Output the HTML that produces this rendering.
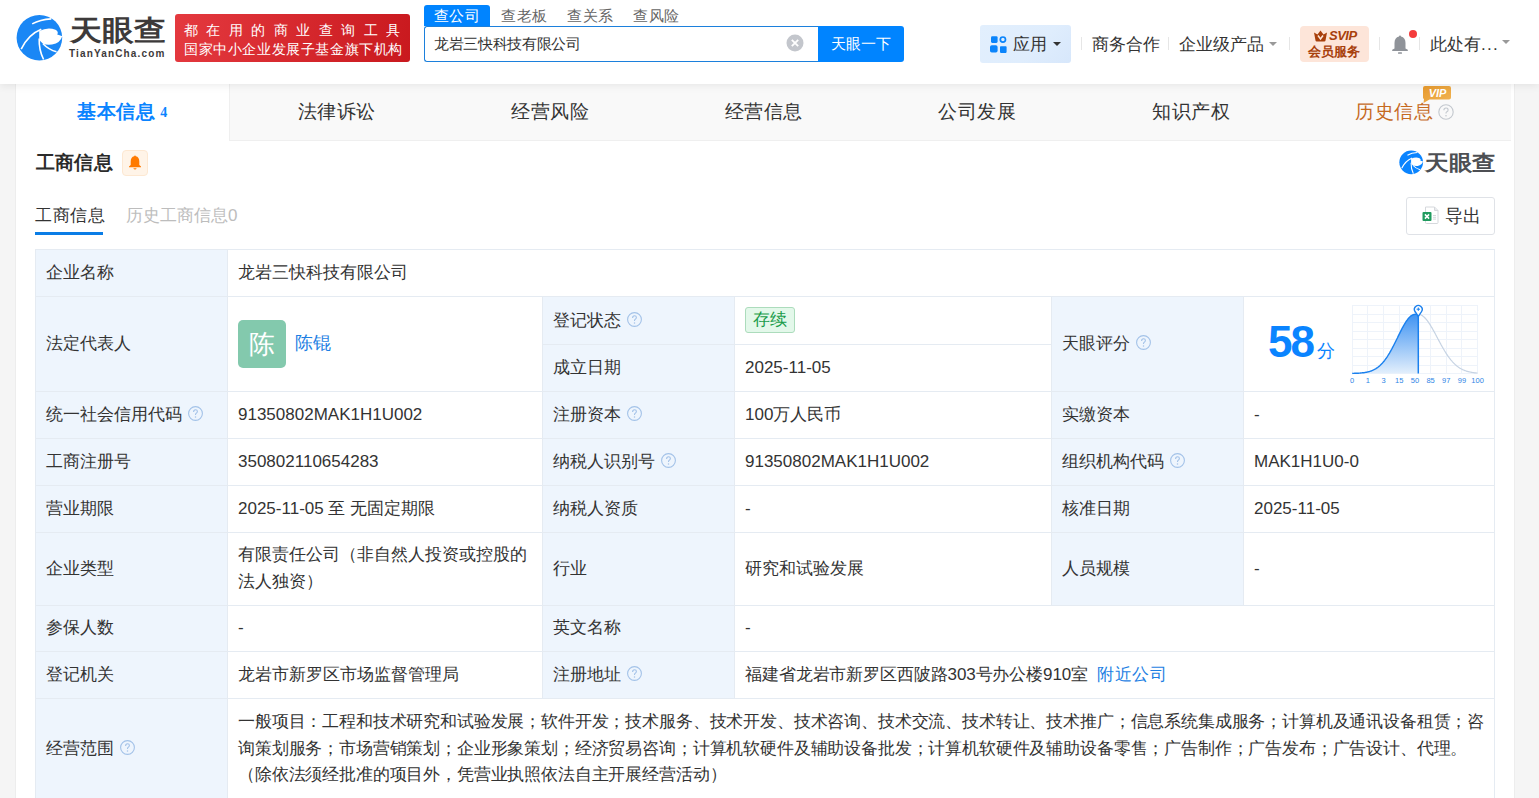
<!DOCTYPE html>
<html><head><meta charset="utf-8">
<style>
*{box-sizing:border-box;margin:0;padding:0}
html,body{width:1539px;height:798px;overflow:hidden;background:#f5f5f5;font-family:"Liberation Sans",sans-serif;color:#333}
.abs{position:absolute}
.nw{white-space:nowrap}
#hdr{position:absolute;left:0;top:0;width:1539px;height:84px;background:#fff;box-shadow:0 2px 8px rgba(0,0,0,.075);z-index:5}
.banner{left:175px;top:14px;width:235px;height:47.5px;border-radius:3px;background:linear-gradient(100deg,#e4393f,#c9191e)}
.stab{top:5px;height:21px;font-size:15px;letter-spacing:0.5px;line-height:21px;color:#666;white-space:nowrap}
.stab.on{background:#0084ff;color:#fff;border-radius:3px 3px 0 0;text-align:center}
.search{left:424px;top:26px;width:395px;height:36px;border:1px solid #1c80dc;border-right:none;border-radius:3px 0 0 3px;background:#fff}
.sbtn{left:818px;top:26px;width:86px;height:36px;background:#0084ff;color:#fff;font-size:15px;letter-spacing:0.2px;line-height:36px;text-align:center;border-radius:0 3px 3px 0}
.nav{top:33px;font-size:17px;line-height:24px;color:#333;white-space:nowrap}
.sep{top:37px;width:1px;height:13px;background:#e6e6e6}
.caret{width:0;height:0;border-left:4px solid transparent;border-right:4px solid transparent;border-top:4px solid #999}
#card{position:absolute;left:15px;top:84px;width:1500px;height:714px;background:#fff;border-left:1px solid #ededed;border-right:1px solid #ededed}
.tab{position:absolute;top:0;height:57px;background:#f9f9f9;border-bottom:1px solid #efefef;font-size:19px;letter-spacing:0.5px;line-height:56px;text-align:center;color:#333;white-space:nowrap}
table{position:absolute;left:19px;top:165px;width:1460px;border-collapse:collapse;font-size:17px;color:#333;table-layout:fixed}
td{border:1px solid #e5ebf2;padding:0 10px;vertical-align:middle;line-height:26px;white-space:nowrap}
td.l{background:#eef5fd}
.q{display:inline-block;width:15px;height:15px;vertical-align:-1px;margin-left:6px}
.link{color:#1e7fe3}
</style></head><body>
<div id="hdr">
  <svg class="abs" style="left:14px;top:12px" width="52" height="52" viewBox="0 0 52 52">
    <circle cx="25.4" cy="25.7" r="22.8" fill="#1a87f5"/>
    <path d="M18.2 11.9 Q26 7.6 37.3 6.9" stroke="#fff" stroke-width="1.6" fill="none"/>
    <path d="M7.2 37.2 Q14 22.5 27.3 17.2" stroke="#fff" stroke-width="1.6" fill="none"/>
    <path d="M25.2 26.5 Q24.8 38 29.6 47.5" stroke="#fff" stroke-width="1.6" fill="none"/>
    <path d="M29 31.8 Q35 38 42.5 39.8" stroke="#fff" stroke-width="1.6" fill="none"/>
    <path d="M25.2 19 Q34 14.5 41.5 17.8 Q45 20 43.2 22.5 Q45.5 23 48.2 24.3 Q46.5 31 38 32.5 Q32 33 29 31.8 Q25.5 29.5 25.2 26.5 Z" fill="#fff"/>
  </svg>
  <div class="abs nw" style="left:69.5px;top:14px;font-size:28px;line-height:34px;font-weight:900;color:#3d3a3a;transform:scaleX(1.14);transform-origin:0 0">天眼查</div>
  <div class="abs nw" style="left:69px;top:48px;font-size:10px;line-height:11px;font-weight:bold;color:#3d3a3a;letter-spacing:1.15px">TianYanCha.com</div>
  <div class="abs banner">
    <div class="abs nw" style="left:9px;top:8px;font-size:14px;line-height:16px;letter-spacing:8.45px;color:#fff">都在用的商业查询工具</div>
    <div class="abs nw" style="left:9px;top:27px;font-size:14px;line-height:16px;color:#fff;letter-spacing:0.6px">国家中小企业发展子基金旗下机构</div>
  </div>
  <div class="abs stab on" style="left:424px;width:66px">查公司</div>
  <div class="abs stab" style="left:501px">查老板</div>
  <div class="abs stab" style="left:567px">查关系</div>
  <div class="abs stab" style="left:633px">查风险</div>
  <div class="abs search"></div>
  <div class="abs nw" style="left:434px;top:33px;font-size:15px;line-height:22px;color:#333;letter-spacing:-0.35px">龙岩三快科技有限公司</div>
  <svg class="abs" style="left:786px;top:34px" width="18" height="18" viewBox="0 0 18 18"><circle cx="9" cy="9" r="8.5" fill="#c3c6cc"/><path d="M5.8 5.8 L12.2 12.2 M12.2 5.8 L5.8 12.2" stroke="#fff" stroke-width="1.8"/></svg>
  <div class="abs sbtn">天眼一下</div>

  <div class="abs" style="left:980px;top:25px;width:91px;height:38px;background:linear-gradient(135deg,#e2effd 0%,#dfedfd 60%,#d7e7fb 100%);border-radius:3px"></div>
  <svg class="abs" style="left:990px;top:36px" width="17" height="17" viewBox="0 0 17 17">
    <rect x="1" y="0.3" width="6.6" height="6.6" rx="1.3" fill="#0a84fb"/>
    <circle cx="12.9" cy="3.6" r="2.6" fill="none" stroke="#0a84fb" stroke-width="1.7"/>
    <rect x="0" y="9.3" width="7.6" height="7.2" rx="1.8" fill="#0a84fb"/>
    <rect x="10" y="10.3" width="6.6" height="6.6" rx="0.8" fill="#0a84fb"/>
  </svg>
  <div class="abs nav" style="left:1013px">应用</div>
  <div class="abs caret" style="left:1053px;top:42px;border-top-color:#333"></div>
  <div class="abs sep" style="left:1081px"></div>
  <div class="abs nav" style="left:1092px">商务合作</div>
  <div class="abs sep" style="left:1168px"></div>
  <div class="abs nav" style="left:1179px">企业级产品</div>
  <div class="abs caret" style="left:1269px;top:42px"></div>
  <div class="abs sep" style="left:1289px"></div>
  <div class="abs" style="left:1300px;top:26px;width:69px;height:36px;background:#fde5d9;border-radius:4px"></div>
  <svg class="abs" style="left:1313px;top:30px" width="15" height="12" viewBox="0 0 15 12">
    <path d="M1 2.5 L4.5 4.5 L7.5 0.5 L10.5 4.5 L14 2.5 L12.5 10.5 Q12.3 11.5 11.3 11.5 L3.7 11.5 Q2.7 11.5 2.5 10.5 Z" fill="#a8400c"/>
    <path d="M5 5.5 L7.5 9 L10 5.5" fill="none" stroke="#fde5d9" stroke-width="1.5"/>
  </svg>
  <div class="abs nw" style="left:1329px;top:28px;font-size:13px;line-height:16px;font-weight:bold;font-style:italic;color:#a8400c;letter-spacing:-0.5px">SVIP</div>
  <div class="abs nw" style="left:1308px;top:43px;font-size:13px;line-height:17px;font-weight:bold;color:#a8400c">会员服务</div>
  <div class="abs sep" style="left:1379px"></div>
  <svg class="abs" style="left:1391px;top:35px" width="18" height="20" viewBox="0 0 18 20">
    <path d="M9 0.5 Q10 0.5 10 1.5 Q14.5 2.5 14.5 8 L14.5 13.5 L16.8 14.8 L16.8 16 L1.2 16 L1.2 14.8 L3.5 13.5 L3.5 8 Q3.5 2.5 8 1.5 Q8 0.5 9 0.5 Z" fill="#8f9399"/>
    <rect x="7" y="17.2" width="4" height="1.6" rx="0.6" fill="#8f9399"/>
  </svg>
  <div class="abs" style="left:1409px;top:29.5px;width:8px;height:8px;border-radius:50%;background:#f43c3c"></div>
  <div class="abs sep" style="left:1419px"></div>
  <div class="abs nav" style="left:1430px">此处有<span style="letter-spacing:1.3px">...</span></div>
  <div class="abs caret" style="left:1502px;top:40px"></div>
</div>

<div id="card">
  <div class="tab" style="left:0;width:213px;background:#fff;border-bottom-color:#fff;color:#0a84ff;font-weight:bold">基本信息<span style="font-size:14px;font-weight:bold;font-family:'Liberation Serif',serif;margin-left:5px;position:relative;top:-1px">4</span></div>
  <div class="tab" style="left:213px;width:214px;border-left:1px solid #efefef">法律诉讼</div>
  <div class="tab" style="left:427px;width:214px">经营风险</div>
  <div class="tab" style="left:641px;width:213px">经营信息</div>
  <div class="tab" style="left:854px;width:214px">公司发展</div>
  <div class="tab" style="left:1068px;width:214px">知识产权</div>
  <div class="tab" style="left:1282px;width:213px;color:#c66a1f;text-align:left;padding-left:57px">历史信息<svg style="vertical-align:-2px;margin-left:5px" width="16" height="16" viewBox="0 0 16 16"><circle cx="8" cy="8" r="7.2" fill="none" stroke="#c3c8ce" stroke-width="1.1"/><path d="M5.9 6.2 Q5.9 4 8 4 Q10.1 4 10.1 5.9 Q10.1 7.2 8.5 8 Q8 8.3 8 9.6" fill="none" stroke="#c3c8ce" stroke-width="1.1"/><circle cx="8" cy="11.7" r="0.8" fill="#c3c8ce"/></svg></div>
  <svg class="abs" style="left:1406px;top:1px" width="30" height="18" viewBox="0 0 30 18">
    <defs><linearGradient id="vg" x1="0" y1="0" x2="1" y2="1"><stop offset="0" stop-color="#e89a2e"/><stop offset="1" stop-color="#f0b454"/></linearGradient></defs>
    <path d="M3 1 H27 Q29 1 29 3 V12.5 Q29 14.5 27 14.5 H7.5 L1.5 18 L2 14 Q1 13.5 1 12.5 V3 Q1 1 3 1 Z" fill="url(#vg)"/>
    <text x="15.5" y="12" text-anchor="middle" font-size="11" font-weight="bold" font-style="italic" fill="#fff" font-family="Liberation Sans">VIP</text>
  </svg>

  <div class="abs nw" style="left:20px;top:66px;font-size:19px;line-height:26px;font-weight:bold;color:#2b2b2b;letter-spacing:0.2px">工商信息</div>
  <div class="abs" style="left:106px;top:66px;width:26px;height:26px;background:#fff4e8;border:1px solid #fde8d2;border-radius:4px"></div>
  <svg class="abs" style="left:112px;top:71px" width="14" height="15" viewBox="0 0 14 15">
    <path d="M7 0.5 Q7.8 0.5 7.8 1.3 Q11.3 2 11.3 6.5 L11.3 10 L13 11.5 L13 12.3 L1 12.3 L1 11.5 L2.7 10 L2.7 6.5 Q2.7 2 6.2 1.3 Q6.2 0.5 7 0.5 Z" fill="#ff7a00"/>
    <path d="M5.3 13.2 H8.7 Q8.2 14.5 7 14.5 Q5.8 14.5 5.3 13.2 Z" fill="#ff7a00"/>
  </svg>

  <svg class="abs" style="left:1381.6px;top:65.2px" width="27" height="27" viewBox="0 0 52 52">
    <circle cx="25.4" cy="25.7" r="22.8" fill="#0a84ff"/>
    <path d="M18.2 11.9 Q26 7.6 37.3 6.9" stroke="#fff" stroke-width="2" fill="none"/>
    <path d="M7.2 37.2 Q14 22.5 27.3 17.2" stroke="#fff" stroke-width="2" fill="none"/>
    <path d="M25.2 26.5 Q24.8 38 29.6 47.5" stroke="#fff" stroke-width="2" fill="none"/>
    <path d="M29 31.8 Q35 38 42.5 39.8" stroke="#fff" stroke-width="2" fill="none"/>
    <path d="M25.2 19 Q34 14.5 41.5 17.8 Q45 20 43.2 22.5 Q45.5 23 48.2 24.3 Q46.5 31 38 32.5 Q32 33 29 31.8 Q25.5 29.5 25.2 26.5 Z" fill="#fff"/>
  </svg>
  <div class="abs nw" style="left:1408.5px;top:66px;font-size:21px;line-height:26px;font-weight:bold;color:#4d4f53;transform:scaleX(1.12);transform-origin:0 0">天眼查</div>

  <div class="abs nw" style="left:19px;top:118.5px;font-size:17px;letter-spacing:0.5px;line-height:26px;color:#333">工商信息</div>
  <div class="abs" style="left:19px;top:148px;width:68px;height:2.5px;background:#0a7de6"></div>
  <div class="abs nw" style="left:110px;top:118.5px;font-size:17px;line-height:26px;color:#bdbdbd">历史工商信息0</div>
  <div class="abs" style="left:1390px;top:113px;width:89px;height:38px;border:1px solid #dfe2e7;border-radius:3px"></div>
  <svg class="abs" style="left:1406px;top:122px" width="18" height="18" viewBox="0 0 18 18">
    <path d="M3.5 1 H12.5 L16 4.5 V16.5 Q16 17.5 15 17.5 H4.5 Q3.5 17.5 3.5 16.5 Z" fill="#fff" stroke="#d5d8dc" stroke-width="1"/>
    <path d="M12.5 1 V4.5 H16" fill="#e8eaed" stroke="#d5d8dc" stroke-width="1"/>
    <path d="M11 9.5 H14 M11 11.3 H14 M11 13.1 H14" stroke="#d0d3d7" stroke-width="0.9"/>
    <rect x="0.5" y="6" width="9" height="9" rx="1" fill="#1f9b5e"/>
    <path d="M2.9 8.4 L7.1 12.6 M7.1 8.4 L2.9 12.6" stroke="#fff" stroke-width="1.5"/>
  </svg>
  <div class="abs nw" style="left:1429px;top:119px;font-size:18px;line-height:26px;color:#333;letter-spacing:-0.5px">导出</div>

  <table>
    <colgroup><col style="width:192px"><col style="width:315px"><col style="width:192px"><col style="width:317px"><col style="width:192px"><col style="width:251px"></colgroup>
    <tr style="height:47px"><td class="l">企业名称</td><td colspan="5">龙岩三快科技有限公司</td></tr>
    <tr style="height:48px"><td class="l" rowspan="2">法定代表人</td><td rowspan="2" style="position:relative"><div class="abs" style="left:10px;top:23px;width:48px;height:48px;border-radius:5px;background:#83c9ad;color:#fff;font-size:26px;line-height:48px;text-align:center">陈</div><span class="link" style="margin-left:57px;font-size:18px;position:relative;top:-1px">陈锟</span></td><td class="l">登记状态<svg class="q" viewBox="0 0 15 15"><circle cx="7.5" cy="7.5" r="6.9" fill="none" stroke="#a3c2e8" stroke-width="1.1"/><path d="M5.6 5.9 Q5.6 3.8 7.5 3.8 Q9.4 3.8 9.4 5.6 Q9.4 6.8 8 7.5 Q7.5 7.8 7.5 9" fill="none" stroke="#a3c2e8" stroke-width="1.1"/><circle cx="7.5" cy="10.9" r="0.75" fill="#a3c2e8"/></svg></td><td><span style="display:inline-block;height:26px;padding:0 7px;border:1px solid #acdcbc;background:#e3f8ea;color:#1a9c4a;border-radius:3px;line-height:24px;vertical-align:middle;position:relative;top:-1px">存续</span></td><td class="l" rowspan="2">天眼评分<svg class="q" viewBox="0 0 15 15"><circle cx="7.5" cy="7.5" r="6.9" fill="none" stroke="#a3c2e8" stroke-width="1.1"/><path d="M5.6 5.9 Q5.6 3.8 7.5 3.8 Q9.4 3.8 9.4 5.6 Q9.4 6.8 8 7.5 Q7.5 7.8 7.5 9" fill="none" stroke="#a3c2e8" stroke-width="1.1"/><circle cx="7.5" cy="10.9" r="0.75" fill="#a3c2e8"/></svg></td><td rowspan="2"></td></tr>
    <tr style="height:47px"><td class="l">成立日期</td><td>2025-11-05</td></tr>
    <tr style="height:47px"><td class="l">统一社会信用代码<svg class="q" viewBox="0 0 15 15"><circle cx="7.5" cy="7.5" r="6.9" fill="none" stroke="#a3c2e8" stroke-width="1.1"/><path d="M5.6 5.9 Q5.6 3.8 7.5 3.8 Q9.4 3.8 9.4 5.6 Q9.4 6.8 8 7.5 Q7.5 7.8 7.5 9" fill="none" stroke="#a3c2e8" stroke-width="1.1"/><circle cx="7.5" cy="10.9" r="0.75" fill="#a3c2e8"/></svg></td><td>91350802MAK1H1U002</td><td class="l">注册资本<svg class="q" viewBox="0 0 15 15"><circle cx="7.5" cy="7.5" r="6.9" fill="none" stroke="#a3c2e8" stroke-width="1.1"/><path d="M5.6 5.9 Q5.6 3.8 7.5 3.8 Q9.4 3.8 9.4 5.6 Q9.4 6.8 8 7.5 Q7.5 7.8 7.5 9" fill="none" stroke="#a3c2e8" stroke-width="1.1"/><circle cx="7.5" cy="10.9" r="0.75" fill="#a3c2e8"/></svg></td><td>100万人民币</td><td class="l">实缴资本</td><td>-</td></tr>
    <tr style="height:47px"><td class="l">工商注册号</td><td>350802110654283</td><td class="l">纳税人识别号<svg class="q" viewBox="0 0 15 15"><circle cx="7.5" cy="7.5" r="6.9" fill="none" stroke="#a3c2e8" stroke-width="1.1"/><path d="M5.6 5.9 Q5.6 3.8 7.5 3.8 Q9.4 3.8 9.4 5.6 Q9.4 6.8 8 7.5 Q7.5 7.8 7.5 9" fill="none" stroke="#a3c2e8" stroke-width="1.1"/><circle cx="7.5" cy="10.9" r="0.75" fill="#a3c2e8"/></svg></td><td>91350802MAK1H1U002</td><td class="l">组织机构代码<svg class="q" viewBox="0 0 15 15"><circle cx="7.5" cy="7.5" r="6.9" fill="none" stroke="#a3c2e8" stroke-width="1.1"/><path d="M5.6 5.9 Q5.6 3.8 7.5 3.8 Q9.4 3.8 9.4 5.6 Q9.4 6.8 8 7.5 Q7.5 7.8 7.5 9" fill="none" stroke="#a3c2e8" stroke-width="1.1"/><circle cx="7.5" cy="10.9" r="0.75" fill="#a3c2e8"/></svg></td><td>MAK1H1U0-0</td></tr>
    <tr style="height:47px"><td class="l">营业期限</td><td>2025-11-05 至 无固定期限</td><td class="l">纳税人资质</td><td>-</td><td class="l">核准日期</td><td>2025-11-05</td></tr>
    <tr style="height:73px"><td class="l">企业类型</td><td style="line-height:26.8px">有限责任公司（非自然人投资或控股的<br>法人独资）</td><td class="l">行业</td><td>研究和试验发展</td><td class="l">人员规模</td><td>-</td></tr>
    <tr style="height:46px"><td class="l" style="padding-bottom:2px">参保人数</td><td style="padding-bottom:2px">-</td><td class="l" style="padding-bottom:2px">英文名称</td><td colspan="3" style="padding-bottom:2px">-</td></tr>
    <tr style="height:47px"><td class="l">登记机关</td><td>龙岩市新罗区市场监督管理局</td><td class="l">注册地址<svg class="q" viewBox="0 0 15 15"><circle cx="7.5" cy="7.5" r="6.9" fill="none" stroke="#a3c2e8" stroke-width="1.1"/><path d="M5.6 5.9 Q5.6 3.8 7.5 3.8 Q9.4 3.8 9.4 5.6 Q9.4 6.8 8 7.5 Q7.5 7.8 7.5 9" fill="none" stroke="#a3c2e8" stroke-width="1.1"/><circle cx="7.5" cy="10.9" r="0.75" fill="#a3c2e8"/></svg></td><td colspan="3"><span style="letter-spacing:-0.12px">福建省龙岩市新罗区西陂路303号办公楼910室</span><span class="link" style="margin-left:9px;letter-spacing:0.6px">附近公司</span></td></tr>
    <tr style="height:100px"><td class="l" style="vertical-align:top;padding-top:37px">经营范围<svg class="q" viewBox="0 0 15 15"><circle cx="7.5" cy="7.5" r="6.9" fill="none" stroke="#a3c2e8" stroke-width="1.1"/><path d="M5.6 5.9 Q5.6 3.8 7.5 3.8 Q9.4 3.8 9.4 5.6 Q9.4 6.8 8 7.5 Q7.5 7.8 7.5 9" fill="none" stroke="#a3c2e8" stroke-width="1.1"/><circle cx="7.5" cy="10.9" r="0.75" fill="#a3c2e8"/></svg></td><td colspan="5" style="vertical-align:top;padding-top:10px;line-height:26.7px;letter-spacing:-0.16px">一般项目：工程和技术研究和试验发展；软件开发；技术服务、技术开发、技术咨询、技术交流、技术转让、技术推广；信息系统集成服务；计算机及通讯设备租赁；咨<br>询策划服务；市场营销策划；企业形象策划；经济贸易咨询；计算机软硬件及辅助设备批发；计算机软硬件及辅助设备零售；广告制作；广告发布；广告设计、代理。<br>（除依法须经批准的项目外，凭营业执照依法自主开展经营活动）</td></tr>
  </table>
</div>

<div class="abs nw" style="left:1268px;top:318px;font-size:44px;line-height:48px;font-weight:bold;color:#0a84ff;letter-spacing:-2px">58</div>
<div class="abs nw" style="left:1316.5px;top:341px;font-size:18px;line-height:20px;color:#0a84ff">分</div>
<svg class="abs" style="left:1345px;top:300px" width="140" height="88" viewBox="0 0 140 88">
<defs><linearGradient id="gf" x1="0" y1="0" x2="0" y2="1"><stop offset="0" stop-color="#3f93f2"/><stop offset="1" stop-color="#e3effc"/></linearGradient></defs>
<g stroke="#eef3fa" stroke-width="1" shape-rendering="crispEdges"><line x1="7.2" y1="5.9" x2="7.2" y2="73.5"/><line x1="22.9" y1="5.9" x2="22.9" y2="73.5"/><line x1="38.5" y1="5.9" x2="38.5" y2="73.5"/><line x1="54.2" y1="5.9" x2="54.2" y2="73.5"/><line x1="69.9" y1="5.9" x2="69.9" y2="73.5"/><line x1="85.6" y1="5.9" x2="85.6" y2="73.5"/><line x1="101.2" y1="5.9" x2="101.2" y2="73.5"/><line x1="116.9" y1="5.9" x2="116.9" y2="73.5"/><line x1="132.6" y1="5.9" x2="132.6" y2="73.5"/><line x1="7.2" y1="5.9" x2="132.6" y2="5.9"/><line x1="7.2" y1="14.3" x2="132.6" y2="14.3"/><line x1="7.2" y1="22.8" x2="132.6" y2="22.8"/><line x1="7.2" y1="31.2" x2="132.6" y2="31.2"/><line x1="7.2" y1="39.7" x2="132.6" y2="39.7"/><line x1="7.2" y1="48.1" x2="132.6" y2="48.1"/><line x1="7.2" y1="56.6" x2="132.6" y2="56.6"/><line x1="7.2" y1="65.0" x2="132.6" y2="65.0"/><line x1="7.2" y1="73.5" x2="132.6" y2="73.5"/></g>
<polygon points="7.2,73.5 7.5,73.4 8.0,73.4 8.5,73.4 9.0,73.4 9.5,73.3 10.0,73.3 10.5,73.3 11.0,73.3 11.5,73.3 12.0,73.3 12.5,73.2 13.0,73.2 13.5,73.2 14.0,73.1 14.5,73.1 15.0,73.1 15.5,73.0 16.0,73.0 16.5,72.9 17.0,72.9 17.5,72.8 18.0,72.8 18.5,72.7 19.0,72.7 19.5,72.6 20.0,72.5 20.5,72.4 21.0,72.3 21.5,72.2 22.0,72.1 22.5,72.0 23.0,71.9 23.5,71.8 24.0,71.6 24.5,71.5 25.0,71.3 25.5,71.2 26.0,71.0 26.5,70.8 27.0,70.6 27.5,70.4 28.0,70.2 28.5,69.9 29.0,69.7 29.5,69.4 30.0,69.2 30.5,68.9 31.0,68.6 31.5,68.2 32.0,67.9 32.5,67.6 33.0,67.2 33.5,66.8 34.0,66.4 34.5,65.9 35.0,65.5 35.5,65.0 36.0,64.5 36.5,64.0 37.0,63.5 37.5,63.0 38.0,62.4 38.5,61.8 39.0,61.2 39.5,60.6 40.0,59.9 40.5,59.2 41.0,58.5 41.5,57.8 42.0,57.1 42.5,56.3 43.0,55.5 43.5,54.7 44.0,53.9 44.5,53.1 45.0,52.2 45.5,51.3 46.0,50.4 46.5,49.5 47.0,48.6 47.5,47.6 48.0,46.7 48.5,45.7 49.0,44.7 49.5,43.7 50.0,42.7 50.5,41.7 51.0,40.7 51.5,39.7 52.0,38.7 52.5,37.7 53.0,36.6 53.5,35.6 54.0,34.6 54.5,33.6 55.0,32.6 55.5,31.6 56.0,30.6 56.5,29.6 57.0,28.7 57.5,27.7 58.0,26.8 58.5,25.9 59.0,25.0 59.5,24.1 60.0,23.3 60.5,22.5 61.0,21.7 61.5,21.0 62.0,20.3 62.5,19.6 63.0,18.9 63.5,18.3 64.0,17.8 64.5,17.2 65.0,16.8 65.5,16.3 66.0,15.9 66.5,15.6 67.0,15.3 67.5,15.0 68.0,14.8 68.5,14.6 69.0,14.5 69.5,14.4 70.0,14.4 70.5,14.4 71.0,14.4 71.5,14.4 72.0,14.4 72.5,14.4 73.0,14.4 73.3,73.5 7.2,73.5" fill="url(#gf)"/>
<polyline points="7.2,73.5 7.5,73.4 8.0,73.4 8.5,73.4 9.0,73.4 9.5,73.3 10.0,73.3 10.5,73.3 11.0,73.3 11.5,73.3 12.0,73.3 12.5,73.2 13.0,73.2 13.5,73.2 14.0,73.1 14.5,73.1 15.0,73.1 15.5,73.0 16.0,73.0 16.5,72.9 17.0,72.9 17.5,72.8 18.0,72.8 18.5,72.7 19.0,72.7 19.5,72.6 20.0,72.5 20.5,72.4 21.0,72.3 21.5,72.2 22.0,72.1 22.5,72.0 23.0,71.9 23.5,71.8 24.0,71.6 24.5,71.5 25.0,71.3 25.5,71.2 26.0,71.0 26.5,70.8 27.0,70.6 27.5,70.4 28.0,70.2 28.5,69.9 29.0,69.7 29.5,69.4 30.0,69.2 30.5,68.9 31.0,68.6 31.5,68.2 32.0,67.9 32.5,67.6 33.0,67.2 33.5,66.8 34.0,66.4 34.5,65.9 35.0,65.5 35.5,65.0 36.0,64.5 36.5,64.0 37.0,63.5 37.5,63.0 38.0,62.4 38.5,61.8 39.0,61.2 39.5,60.6 40.0,59.9 40.5,59.2 41.0,58.5 41.5,57.8 42.0,57.1 42.5,56.3 43.0,55.5 43.5,54.7 44.0,53.9 44.5,53.1 45.0,52.2 45.5,51.3 46.0,50.4 46.5,49.5 47.0,48.6 47.5,47.6 48.0,46.7 48.5,45.7 49.0,44.7 49.5,43.7 50.0,42.7 50.5,41.7 51.0,40.7 51.5,39.7 52.0,38.7 52.5,37.7 53.0,36.6 53.5,35.6 54.0,34.6 54.5,33.6 55.0,32.6 55.5,31.6 56.0,30.6 56.5,29.6 57.0,28.7 57.5,27.7 58.0,26.8 58.5,25.9 59.0,25.0 59.5,24.1 60.0,23.3 60.5,22.5 61.0,21.7 61.5,21.0 62.0,20.3 62.5,19.6 63.0,18.9 63.5,18.3 64.0,17.8 64.5,17.2 65.0,16.8 65.5,16.3 66.0,15.9 66.5,15.6 67.0,15.3 67.5,15.0 68.0,14.8 68.5,14.6 69.0,14.5 69.5,14.4 70.0,14.4 70.5,14.4 71.0,14.4 71.5,14.4 72.0,14.4 72.5,14.4 73.0,14.4" fill="none" stroke="#1a80ee" stroke-width="1.4"/>
<polyline points="73.0,14.4 73.5,14.4 74.0,14.4 74.5,14.5 75.0,14.6 75.5,14.8 76.0,15.0 76.5,15.2 77.0,15.5 77.5,15.8 78.0,16.2 78.5,16.6 79.0,17.0 79.5,17.5 80.0,18.0 80.5,18.5 81.0,19.1 81.5,19.7 82.0,20.3 82.5,20.9 83.0,21.6 83.5,22.3 84.0,23.1 84.5,23.8 85.0,24.6 85.5,25.4 86.0,26.2 86.5,27.1 87.0,27.9 87.5,28.8 88.0,29.7 88.5,30.6 89.0,31.5 89.5,32.4 90.0,33.3 90.5,34.3 91.0,35.2 91.5,36.1 92.0,37.1 92.5,38.0 93.0,39.0 93.5,39.9 94.0,40.9 94.5,41.8 95.0,42.7 95.5,43.6 96.0,44.6 96.5,45.5 97.0,46.4 97.5,47.2 98.0,48.1 98.5,49.0 99.0,49.8 99.5,50.7 100.0,51.5 100.5,52.3 101.0,53.1 101.5,53.9 102.0,54.6 102.5,55.4 103.0,56.1 103.5,56.8 104.0,57.5 104.5,58.2 105.0,58.8 105.5,59.4 106.0,60.1 106.5,60.7 107.0,61.2 107.5,61.8 108.0,62.3 108.5,62.9 109.0,63.4 109.5,63.9 110.0,64.4 110.5,64.8 111.0,65.2 111.5,65.7 112.0,66.1 112.5,66.5 113.0,66.8 113.5,67.2 114.0,67.5 114.5,67.9 115.0,68.2 115.5,68.5 116.0,68.8 116.5,69.0 117.0,69.3 117.5,69.6 118.0,69.8 118.5,70.0 119.0,70.2 119.5,70.4 120.0,70.6 120.5,70.8 121.0,71.0 121.5,71.1 122.0,71.3 122.5,71.4 123.0,71.6 123.5,71.7 124.0,71.8 124.5,71.9 125.0,72.0 125.5,72.1 126.0,72.2 126.5,72.3 127.0,72.4 127.5,72.5 128.0,72.6 128.5,72.6 129.0,72.7 129.5,72.8 130.0,72.8 130.5,72.9 131.0,72.9 131.5,73.0 132.0,73.0 132.5,73.0" fill="none" stroke="#c6d3e3" stroke-width="1.2"/>
<line x1="73.3" y1="14" x2="73.3" y2="73.5" stroke="#1a80ee" stroke-width="1.5"/>
<path d="M73.3 16.5 L70 11.5 A3.9 3.9 0 1 1 76.6 11.5 Z" fill="#fff" stroke="#1a80ee" stroke-width="1.4"/>
<path d="M71.6 9.2 H75 M73.3 7.5 V10.9" stroke="#1a80ee" stroke-width="1"/>
<g fill="#2f86e6" font-size="7.5" text-anchor="middle" font-family="Liberation Sans"><text x="7.2" y="83">0</text><text x="22.9" y="83">1</text><text x="38.5" y="83">3</text><text x="54.2" y="83">15</text><text x="69.9" y="83">50</text><text x="85.6" y="83">85</text><text x="101.2" y="83">97</text><text x="116.9" y="83">99</text><text x="132.6" y="83">100</text></g>
</svg>
</body></html>
